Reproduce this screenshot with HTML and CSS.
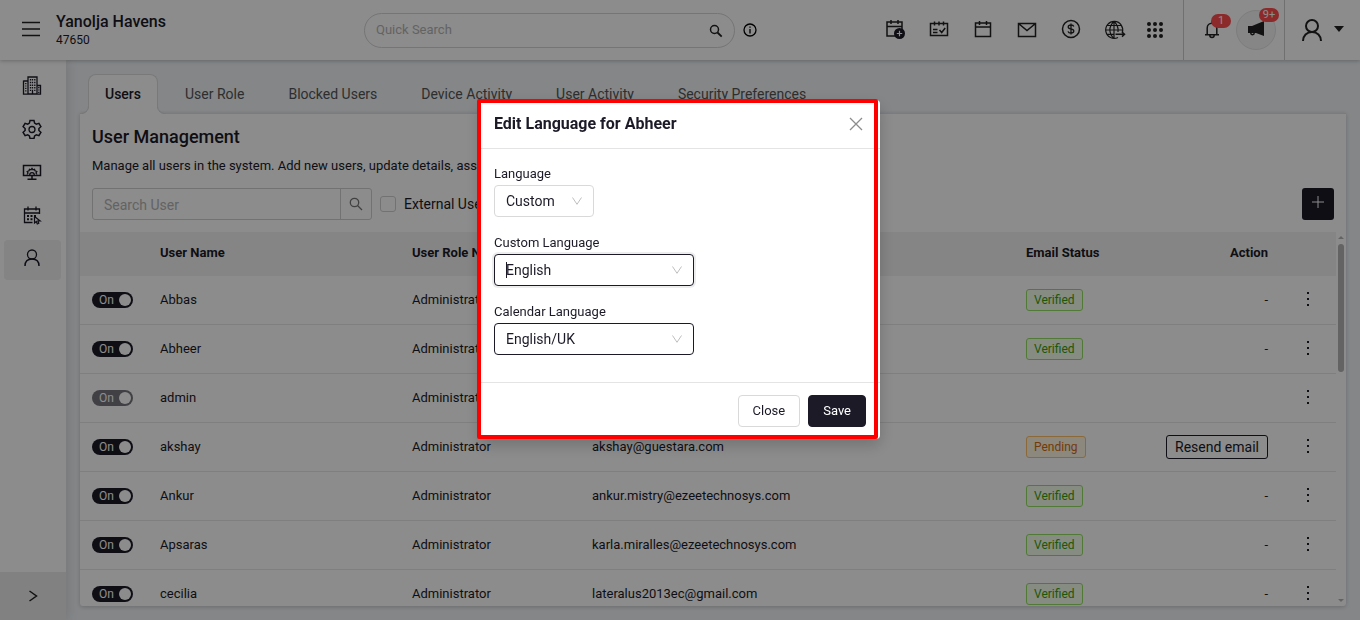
FILE: index.html
```html
<!DOCTYPE html>
<html lang="en">
<head>
<meta charset="utf-8">
<meta name="viewport" content="width=device-width, initial-scale=1">
<title>User Management</title>
<link rel="stylesheet" href="styles.css">
</head>
<body>
<div class="app">
  <header class="topbar">
    <button class="icon-btn menu-btn" aria-label="Menu"><svg width="18" height="16" viewBox="0 0 18 16"><path d="M0 1.5h18M0 8h18M0 14.500h18"/></svg></button>
    <div class="property"><strong>Yanolja Havens</strong><span>47650</span></div>
    <div class="quick">
      <input type="text" placeholder="Quick Search" aria-label="Quick Search">
      <svg width="14" height="14" viewBox="0 0 14 14"><circle cx="5.500" cy="5.500" r="4"/><path d="M8.500 8.500l4.200 4.200" stroke-width="1.800"/></svg>
    </div>
    <button class="icon-btn info-btn" aria-label="Info"><svg width="14" height="14" viewBox="0 0 14 14"><circle cx="7" cy="7" r="6"/><path d="M7 6v4.500M7 3.500v1.300"/></svg></button>
    <nav class="tools" aria-label="Tools">
      <button class="icon-btn" aria-label="New booking"><svg width="24" height="24" viewBox="0 0 24 24"><path d="M4 5h15v14H4zM4 9.500h15M8 3v4M15 3v4"/><circle cx="16.500" cy="16.500" r="5.500" fill="#1c1a27" stroke="none"/><path d="M16.500 13.800v5.400M13.800 16.500h5.400" stroke="#fff" stroke-width="1.200"/></svg></button>
      <button class="icon-btn" aria-label="Tasks"><svg width="24" height="24" viewBox="0 0 24 24"><path d="M3.500 6.500h17v12h-17zM7.500 4.500v4M12 4.500v4M16.500 4.500v4M6 12.500h4.500M6 15.500h4.500M12.500 13l2.200 2.500 3.500-4.500"/></svg></button>
      <button class="icon-btn" aria-label="Calendar"><svg width="24" height="24" viewBox="0 0 24 24"><path d="M4.500 6h15v13.500h-15zM4.500 10h15M8.500 4v4M15.500 4v4"/></svg></button>
      <button class="icon-btn" aria-label="Mail"><svg width="24" height="24" viewBox="0 0 24 24"><path d="M3.500 6.500h17v13h-17zM3.500 6.500l8.500 7 8.500-7"/></svg></button>
      <button class="icon-btn" aria-label="Payments"><svg width="24" height="24" viewBox="0 0 24 24"><circle cx="12" cy="12" r="8.500"/><path d="M12 6.500v11M14.800 9.500C14.500 8.500 13.500 8 12 8c-1.700 0-2.800.700-2.800 2s1.100 1.700 2.800 2 2.800.800 2.800 2-1.100 2-2.800 2-2.700-.600-3-1.700" stroke-width="1.300"/></svg></button>
      <button class="icon-btn" aria-label="Channels"><svg width="24" height="24" viewBox="0 0 24 24"><path d="M19.300 15.500A8.500 8.500 0 1 0 15 20.500M11 4.500c-5.500 5-5.500 12 0 17M11 4.500c3.500 3 4.500 7 4 10.500M11 4.500v17M2.700 13h16.800M4 8.500h14M4 17.300h7" stroke-width="1.200"/><path d="M12.500 17.300h9M19 15l2.500 2.300-2.500 2.300"/></svg></button>
      <button class="icon-btn apps" aria-label="Apps"><svg width="16" height="16" viewBox="0 0 16 16"><g class="solid"><circle cx="2" cy="2" r="2"/><circle cx="8" cy="2" r="2"/><circle cx="14" cy="2" r="2"/><circle cx="2" cy="8" r="2"/><circle cx="8" cy="8" r="2"/><circle cx="14" cy="8" r="2"/><circle cx="2" cy="14" r="2"/><circle cx="8" cy="14" r="2"/><circle cx="14" cy="14" r="2"/></g></svg></button>
    </nav>
    <div class="alerts">
      <button class="icon-btn bell" aria-label="Notifications"><svg width="16" height="18" viewBox="0 0 16 18"><path d="M3.200 13.500V7a4.800 4.800 0 0 1 9.600 0v6.500M1 13.800h14M8 0v2M5.800 14.300a2.200 2.200 0 0 0 4.400 0"/></svg><span class="badge">1</span></button>
      <button class="icon-btn announce" aria-label="Announcements"><svg width="16" height="16" viewBox="0 0 16 16"><path class="solid" d="M0 5h4L16 0v15L8 12H0z"/><circle cx="4.500" cy="12" r="1.700"/></svg><span class="badge">9+</span></button>
    </div>
    <button class="icon-btn account" aria-label="Account"><svg width="20" height="23" viewBox="0 0 20 23"><circle cx="10" cy="7" r="6"/><path d="M1 22c0-5.500 3.800-9 9-9s9 3.500 9 9"/></svg><svg class="caret" width="10" height="6" viewBox="0 0 10 6"><path class="solid" d="M0 0h10L5 6z"/></svg></button>
  </header>

  <div class="body">
    <aside class="sidebar">
      <nav class="side-nav" aria-label="Main">
        <a href="#" aria-label="Property"><svg width="20" height="20" viewBox="0 0 20 20"><path d="M6 1h9v17H6zM1.500 5H6M1.500 4.500v13.700h17V9.500H15"/><path d="M8.500 3v12M10.500 3v12M12.800 3v12" stroke-dasharray="1.500 1.200"/><path d="M3.800 7v9M16.800 11v6" stroke-dasharray="1.200 1.200"/><path d="M10.500 15v3"/></svg></a>
        <a href="#" aria-label="Settings"><svg width="20" height="20" viewBox="0 0 20 20"><path d="M8 1.500h4l.600 2.600 1.700 1 2.600-.800 2 3.400-2 1.800v2l2 1.800-2 3.400-2.600-.800-1.700 1-.600 2.600H8l-.600-2.600-1.700-1-2.600.800-2-3.400 2-1.800v-2l-2-1.800 2-3.400 2.600.800 1.700-1z" stroke-width="1.500"/><circle cx="10" cy="10.500" r="3"/></svg></a>
        <a href="#" aria-label="System"><svg width="20" height="20" viewBox="0 0 20 20"><path d="M1.500 3.500h17v10h-17zM10 13.500v4M5.500 17.300h9" stroke-width="1.500"/><path d="M5 12.500l1-1.500-.800-1.500L7 8.800l.500-1.500 1.500.5 1-1.500 1 1.500 1.500-.5.500 1.500 1.800.700L14 11l1 1.500M7.700 13a2.300 2.300 0 0 1 4.600 0"/></svg></a>
        <a href="#" aria-label="Reservations"><svg width="20" height="20" viewBox="0 0 20 20"><path d="M17.500 9V4h-15v13.500h8M2.500 8h15M6 1.500v4M14 1.500v4"/><path d="M5 11h2M8.500 11h2M12 11h2M5 14.300h2M8.500 14.300h2" stroke-width="2"/><path d="M12.500 11.500v6.500l1.800-1.500 1 2.500 1.500-.700-1-2.300h2.400z" stroke-width="1.200"/></svg></a>
        <a href="#" class="active" aria-label="Users" aria-current="page"><svg width="20" height="20" viewBox="0 0 20 20"><circle cx="10" cy="6.500" r="4.500"/><path d="M3 18c0-4.500 2.800-7 7-7s7 2.500 7 7" stroke-width="1.500"/></svg></a>
      </nav>
      <button class="icon-btn expand" aria-label="Expand"><svg width="10" height="12" viewBox="0 0 10 12"><path d="M1.500 1l7 5-7 5"/></svg></button>
    </aside>

    <main class="content">
      <nav class="tabs" aria-label="User sections">
        <a href="#" class="tab active">Users</a>
        <a href="#" class="tab">User Role</a>
        <a href="#" class="tab">Blocked Users</a>
        <a href="#" class="tab">Device Activity</a>
        <a href="#" class="tab">User Activity</a>
        <a href="#" class="tab">Security Preferences</a>
      </nav>
      <section class="card">
        <div class="intro">
          <h1>User Management</h1>
          <p>Manage all users in the system. Add new users, update details, ass</p>
          <div class="toolbar">
            <div class="user-search">
              <input type="text" placeholder="Search User" aria-label="Search User">
              <button aria-label="Search"><svg width="14" height="14" viewBox="0 0 14 14"><circle cx="5.500" cy="5.500" r="4.200"/><path d="M8.500 8.500l4.500 4.500"/></svg></button>
            </div>
            <label class="external"><input type="checkbox">External Users</label>
            <button class="add" aria-label="Add user"><svg width="12" height="12" viewBox="0 0 12 12"><path d="M6 0v12M0 6h12"/></svg></button>
          </div>
        </div>
        <div class="table-area">
          <div class="table-view">
            <table>
              <colgroup><col class="c-toggle"><col class="c-name"><col class="c-role"><col><col class="c-status"><col class="c-action"><col class="c-more"></colgroup>
              <thead><tr><th></th><th>User Name</th><th>User Role Name</th><th>Email</th><th>Email Status</th><th class="right">Action</th><th></th></tr></thead>
              <tbody>
                <tr><td><label class="switch"><input type="checkbox" role="switch" checked aria-label="Abbas active"><span>On</span></label></td><td>Abbas</td><td>Administrator</td><td></td><td><span class="tag ok">Verified</span></td><td class="right">-</td><td class="more"><button aria-label="More"><i></i><i></i><i></i></button></td></tr>
                <tr><td><label class="switch"><input type="checkbox" role="switch" checked aria-label="Abheer active"><span>On</span></label></td><td>Abheer</td><td>Administrator</td><td></td><td><span class="tag ok">Verified</span></td><td class="right">-</td><td class="more"><button aria-label="More"><i></i><i></i><i></i></button></td></tr>
                <tr><td><label class="switch"><input type="checkbox" role="switch" checked disabled aria-label="admin active"><span>On</span></label></td><td>admin</td><td>Administrator</td><td></td><td></td><td></td><td class="more"><button aria-label="More"><i></i><i></i><i></i></button></td></tr>
                <tr><td><label class="switch"><input type="checkbox" role="switch" checked aria-label="akshay active"><span>On</span></label></td><td>akshay</td><td>Administrator</td><td>akshay@guestara.com</td><td><span class="tag wait">Pending</span></td><td class="right"><button class="resend">Resend email</button></td><td class="more"><button aria-label="More"><i></i><i></i><i></i></button></td></tr>
                <tr><td><label class="switch"><input type="checkbox" role="switch" checked aria-label="Ankur active"><span>On</span></label></td><td>Ankur</td><td>Administrator</td><td>ankur.mistry@ezeetechnosys.com</td><td><span class="tag ok">Verified</span></td><td class="right">-</td><td class="more"><button aria-label="More"><i></i><i></i><i></i></button></td></tr>
                <tr><td><label class="switch"><input type="checkbox" role="switch" checked aria-label="Apsaras active"><span>On</span></label></td><td>Apsaras</td><td>Administrator</td><td>karla.miralles@ezeetechnosys.com</td><td><span class="tag ok">Verified</span></td><td class="right">-</td><td class="more"><button aria-label="More"><i></i><i></i><i></i></button></td></tr>
                <tr><td><label class="switch"><input type="checkbox" role="switch" checked aria-label="cecilia active"><span>On</span></label></td><td>cecilia</td><td>Administrator</td><td>lateralus2013ec@gmail.com</td><td><span class="tag ok">Verified</span></td><td class="right">-</td><td class="more"><button aria-label="More"><i></i><i></i><i></i></button></td></tr>
              </tbody>
            </table>
          </div>
          <div class="scrollbar" aria-hidden="true"><span class="up"></span><span class="thumb"></span><span class="down"></span></div>
        </div>
      </section>
    </main>
  </div>
</div>

<div class="mask">
  <div class="modal" role="dialog" aria-modal="true" aria-labelledby="modal-title">
    <div class="modal-head">
      <h2 id="modal-title">Edit Language for Abheer</h2>
      <button class="close-x" aria-label="Close dialog"><svg width="14" height="14" viewBox="0 0 14 14"><path d="M1 1l12 12M13 1L1 13"/></svg></button>
    </div>
    <div class="modal-body">
      <div class="field">
        <label for="language">Language</label>
        <div class="select small"><select id="language"><option>Custom</option></select><svg width="10" height="8" viewBox="0 0 10 8"><path d="M.500.500L5 7.300 9.500.500"/></svg></div>
      </div>
      <div class="field">
        <label for="custom-language">Custom Language</label>
        <div class="select strong focused"><select id="custom-language"><option>English</option></select><svg width="10" height="8" viewBox="0 0 10 8"><path d="M.500.500L5 7.300 9.500.500"/></svg></div>
      </div>
      <div class="field">
        <label for="calendar-language">Calendar Language</label>
        <div class="select strong"><select id="calendar-language"><option>English/UK</option></select><svg width="10" height="8" viewBox="0 0 10 8"><path d="M.500.500L5 7.300 9.500.500"/></svg></div>
      </div>
    </div>
    <div class="modal-foot"><button class="btn">Close</button><button class="btn primary">Save</button></div>
    <div class="highlight"></div>
  </div>
</div>
</body>
</html>
```

FILE: styles.css
```css
* { box-sizing: border-box; }
body {
  margin: 0;
  font: 13px/20px Roboto, sans-serif;
  color: #1c1a27;
  overflow: hidden;
}
button, input, select { font: inherit; color: inherit; }
button { cursor: pointer; }
h1, h2, p { margin: 0; }
a { color: inherit; text-decoration: none; }
svg { display: block; flex: none; fill: none; stroke: #222; stroke-width: 1.5; }
.solid { fill: #222; stroke: none; }
.icon-btn {
  display: flex;
  align-items: center;
  justify-content: center;
  padding: 0;
  border: 0;
  background: none;
}

.app { display: flex; flex-direction: column; height: 100vh; background: #f0f4f8; }
.topbar {
  display: flex;
  align-items: center;
  flex: none;
  height: 60px;
  padding-left: 22px;
  background: #fff;
  box-shadow: 0 1px 4px rgba(0, 0, 0, .25);
  position: relative;
  z-index: 2;
}
.menu-btn { padding-bottom: 2px; }
.property { display: flex; flex-direction: column; width: 324px; padding-left: 16px; }
.property strong { font-size: 16px; font-weight: 500; }
.property span { font-size: 12px; line-height: 16px; }
.quick { position: relative; width: 371px; }
.quick input {
  display: block;
  width: 100%;
  height: 35px;
  padding: 0 40px 2px 11px;
  border: 1px solid #d5d5d5;
  border-radius: 18px;
  background: #fff;
  outline: 0;
}
.quick input::placeholder, .user-search input::placeholder { color: #b5b5b5; opacity: 1; }
.quick svg { position: absolute; right: 12px; top: 11px; }
.info-btn { margin-left: 8px; }
.info-btn svg { stroke-width: 1.3; stroke: #000; }
.tools { display: flex; align-items: center; gap: 20px; margin-left: auto; padding: 0 20px 2px 0; }
.apps { padding-top: 2px; }
.alerts {
  display: flex;
  align-items: center;
  gap: 16px;
  height: 60px;
  padding: 0 8px 0 20px;
  border-left: 1px solid #ccc;
  border-right: 1px solid #ccc;
}
.bell, .announce { position: relative; }
.announce {
  width: 40px;
  height: 40px;
  padding-bottom: 2px;
  border: 1px solid #e3e3e3;
  border-radius: 50%;
  background: #f4f4f4;
}
.badge {
  position: absolute;
  right: -11px;
  top: -7px;
  min-width: 20px;
  height: 14px;
  padding: 0 3px;
  border-radius: 7px;
  background: #ff4d4f;
  color: #fff;
  font-size: 11px;
  line-height: 14px;
  text-align: center;
}
.announce .badge { right: -4px; top: -3px; }
.account { gap: 12px; padding: 0 16px 0 17px; }
.account svg { stroke-width: 2; }
.account .caret { margin-bottom: 3px; }

.body { display: flex; flex: 1; min-height: 0; }
.sidebar {
  display: flex;
  flex-direction: column;
  justify-content: space-between;
  width: 66px;
  flex: none;
  background: #fff;
  box-shadow: 0 0 12px rgba(0, 0, 0, .15);
}
.side-nav { display: flex; flex-direction: column; gap: 3px; padding: 8px 5px 0 4px; }
.side-nav a { display: flex; align-items: center; justify-content: center; height: 40px; padding: 0 2px 4px 0; border-radius: 4px; }
.side-nav .active { background: #f0f0f0; }
.side-nav svg { stroke: #1c1a27; stroke-width: 1.3; }
.expand { height: 48px; background: #ececec; }

.content { display: flex; flex-direction: column; flex: 1; min-width: 0; padding: 14px; }
.tabs { display: flex; gap: 10px; height: 40px; margin-bottom: -1px; padding-left: 8px; position: relative; }
.tab {
  height: 40px;
  padding: 0 16px;
  border: 1px solid transparent;
  border-bottom: 0;
  font-size: 14px;
  line-height: 38px;
  color: #555;
  position: relative;
  white-space: nowrap;
}
.tab.active {
  border-color: #dcdcdc;
  border-radius: 8px 8px 0 0;
  background: #fff;
  color: #1c1a27;
  font-weight: 500;
}
.tab.active::before, .tab.active::after {
  content: "";
  position: absolute;
  bottom: 0;
  width: 8px;
  height: 8px;
  border-bottom: 1px solid #dcdcdc;
}
.tab.active::before { right: 100%; border-right: 1px solid #dcdcdc; border-bottom-right-radius: 8px; box-shadow: 3px 3px 0 #fff; clip-path: inset(0); }
.tab.active::after { left: 100%; border-left: 1px solid #dcdcdc; border-bottom-left-radius: 8px; box-shadow: -3px 3px 0 #fff; clip-path: inset(0); }
.card {
  display: flex;
  flex-direction: column;
  flex: 1;
  min-height: 0;
  border-top: 1px solid #dfe2e5;
  border-radius: 0 0 3px 3px;
  background: #fff;
  box-shadow: 0 1px 4px rgba(0, 0, 0, .2);
}
.intro { padding: 9px 12px 12px; }
.intro h1 { font-size: 18px; font-weight: 500; line-height: 28px; }
.intro p { margin: 5px 0 12px; }
.toolbar { display: flex; align-items: center; }
.user-search {
  display: flex;
  width: 280px;
  height: 32px;
  border: 1px solid #d0d0d0;
  border-radius: 3px;
}
.user-search input { flex: 1; min-width: 0; padding: 1px 11px 0; border: 0; outline: 0; background: none; font-size: 14px; }
.user-search button {
  display: flex;
  align-items: center;
  justify-content: center;
  width: 31px;
  padding: 0;
  border: 0;
  border-left: 1px solid #d0d0d0;
  background: none;
}
.user-search svg { stroke: #777; stroke-width: 1.3; }
.external { display: flex; align-items: center; gap: 8px; margin-left: 8px; font-size: 14px; }
.external input { width: 16px; height: 16px; margin: 0; appearance: none; border: 1px solid #d0d0d0; border-radius: 3px; }
.add {
  display: flex;
  align-items: center;
  justify-content: center;
  width: 32px;
  height: 32px;
  margin-left: auto;
  padding: 0 0 4px;
  border: 0;
  border-radius: 3px;
  background: #1c1a27;
}
.add svg { stroke: #fff; stroke-width: 1; }

.table-area { display: flex; flex: 1; min-height: 0; }
.table-view { flex: 1; min-width: 0; overflow: hidden; }
table { width: 100%; table-layout: fixed; border-collapse: separate; border-spacing: 0; }
.c-toggle { width: 68px; }
.c-name { width: 252px; }
.c-role { width: 180px; }
.c-status { width: 139px; }
.c-action { width: 127px; }
.c-more { width: 56px; }
th, td { padding: 0 12px; text-align: left; white-space: nowrap; }
th { height: 44px; background: #f2f2f2; font-weight: 700; padding-bottom: 2px; }
td { height: 49px; border-bottom: 1px solid #e8e8e8; }
.right { text-align: right; }
.switch { display: flex; width: 41px; }
.switch input { position: absolute; opacity: 0; margin: 0; }
.switch span {
  position: relative;
  width: 41px;
  height: 16px;
  padding-left: 7px;
  border-radius: 8px;
  background: #1c1a27;
  color: #fff;
  font-size: 12px;
  line-height: 16px;
}
.switch span::after {
  content: "";
  position: absolute;
  right: 2px;
  top: 2px;
  width: 12px;
  height: 12px;
  border-radius: 50%;
  background: #fff;
}
.switch input:disabled + span { background: #77757d; }
.tag { display: inline-block; height: 22px; padding: 0 7px; border: 1px solid; border-radius: 3px; font-size: 12px; line-height: 20px; vertical-align: middle; }
.tag.ok { color: #389e0d; background: #f6ffed; border-color: #95de64; }
.tag.wait { color: #d46b08; background: #fff7e6; border-color: #ffc069; }
.resend { height: 24px; padding: 0 8px; border: 1px solid #1c1a27; border-radius: 3px; background: #fff; font-size: 14px; line-height: 20px; }
.more button { display: flex; flex-direction: column; align-items: center; gap: 4px; width: 32px; padding: 0 0 2px; border: 0; background: none; }
.more i { width: 2px; height: 2px; background: #1c1a27; }
.scrollbar { display: flex; flex-direction: column; align-items: center; width: 10px; padding: 4px 0 4px; }
.up, .down { border: 3px solid transparent; }
.up { border-top: 0; border-bottom: 3px solid #b5b5b5; }
.down { border-bottom: 0; border-top: 3px solid #b5b5b5; margin-top: auto; }
.thumb { width: 6px; height: 128px; margin-top: 5px; border-radius: 3px; background: #b5b5b5; }

.mask {
  position: fixed;
  inset: 0;
  display: flex;
  justify-content: center;
  align-items: flex-start;
  padding-top: 100px;
  background: rgba(0, 0, 0, .45);
  z-index: 10;
}
.modal {
  position: relative;
  width: 400px;
  border-radius: 4px;
  background: #fff;
  box-shadow: 0 6px 16px rgba(0, 0, 0, .2);
}
.modal-head {
  display: flex;
  align-items: center;
  justify-content: space-between;
  padding: 12px 14px;
  border-bottom: 1px solid #e4e4e4;
}
.modal-head h2 { font-size: 16px; line-height: 24px; font-weight: 700; }
.close-x { display: flex; align-items: center; justify-content: center; width: 20px; height: 20px; padding: 0; border: 0; background: none; }
.close-x svg { stroke: #8c8c8c; stroke-width: 1.3; }
.modal-body { display: flex; flex-direction: column; gap: 15px; padding: 14px 14px 27px; }
.field label { display: block; line-height: 22px; }
.select { position: relative; width: 200px; }
.select.small { width: 100px; }
.select select {
  display: block;
  width: 100%;
  height: 32px;
  padding: 0 11px;
  appearance: none;
  border: 1px solid #d9d9d9;
  border-radius: 4px;
  background: #fff;
  font-size: 14px;
  outline: 0;
}
.select.strong select { border-color: #1c1a27; }
.select.focused select { box-shadow: 0 0 0 2px rgba(28, 26, 39, .08); }
.select.focused::after { content: ""; position: absolute; left: 12px; top: 8px; width: 1px; height: 16px; background: #1c1a27; }
.select svg { position: absolute; right: 12px; top: 12px; pointer-events: none; stroke: #bfbfbf; stroke-width: 1; }
.modal-foot { display: flex; justify-content: flex-end; gap: 8px; padding: 12px 14px; border-top: 1px solid #e4e4e4; }
.btn { height: 32px; padding: 0 14px; border: 1px solid #d9d9d9; border-radius: 4px; background: #fff; }
.btn.primary { border-color: #1c1a27; background: #1c1a27; color: #fff; }
.highlight {
  position: absolute;
  inset: -1px 2px 0 -3px;
  border: 4px solid #f00;
  border-radius: 2px;
  pointer-events: none;
}
```
